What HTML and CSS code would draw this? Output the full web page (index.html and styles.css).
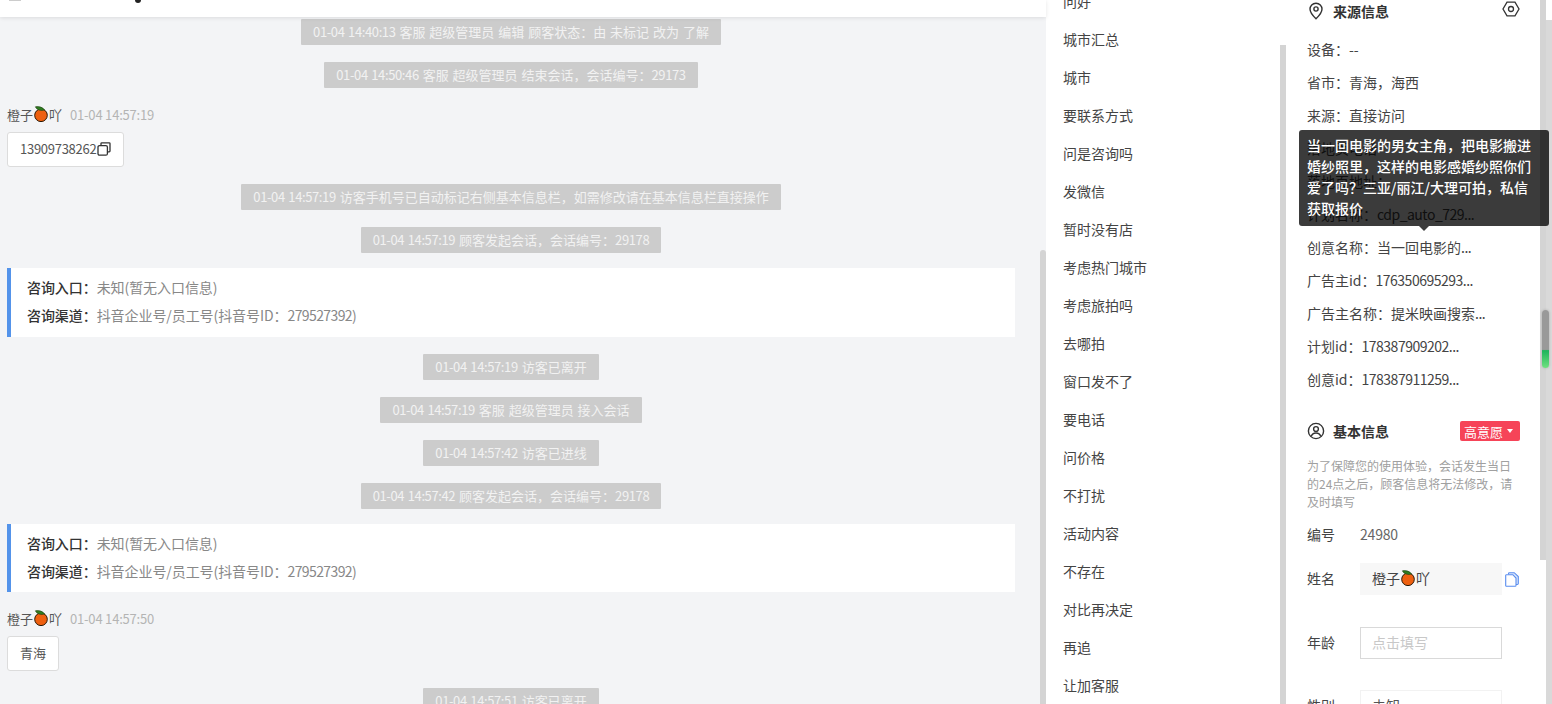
FILE: index.html
```html
<!DOCTYPE html>
<html lang="zh-CN">
<head>
<meta charset="utf-8">
<title>会话详情</title>
<link rel="stylesheet" href="styles.css">
</head>
<body>
<svg class="defs" width="0" height="0" aria-hidden="true">
  <symbol id="orange" viewBox="0 0 16 16">
    <circle cx="8" cy="9.300" r="6.300" fill="#ee6010" stroke="#2a1a08" stroke-width="1"/>
    <path d="M2.400 .8 C6 .2 9.600 1 11.600 4 C8.400 5 4 4.400 2.400 .8Z" fill="#2f7d20" stroke="#1d3d10" stroke-width=".6"/>
  </symbol>
  <symbol id="copy" viewBox="0 0 14 14">
    <path d="M4 3.600V1.600A.8.8 0 0 1 4.800.8H12.200A.8.8 0 0 1 13 1.600V9A.8.8 0 0 1 12.200 9.800H10.400" fill="none" stroke="#333" stroke-width="1.300"/>
    <rect x="1" y="3.600" width="9.400" height="9.600" rx="1.500" fill="none" stroke="#333" stroke-width="1.300"/>
  </symbol>
</svg>
<div class="app">
  <section class="chat">
    <header class="chat-head"><span class="head-check"></span><span class="head-mark"></span></header>
    <div class="chat-body">
      <div class="feed">
        <div class="sys"><span><i class="n">01-04 14:40:13</i> 客服 超级管理员 编辑 顾客状态：由 未标记 改为 了解</span></div>
        <div class="sys"><span><i class="n">01-04 14:50:46</i> 客服 超级管理员 结束会话，会话编号：<i class="n">29173</i></span></div>
        <div class="msg">
          <div class="msg-meta"><span class="msg-name">橙子<svg class="emoji"><use href="#orange"/></svg>吖</span><span class="msg-time">01-04 14:57:19</span></div>
          <div class="bubble"><span class="bubble-num">13909738262</span><svg class="bubble-copy"><use href="#copy"/></svg></div>
        </div>
        <div class="sys"><span><i class="n">01-04 14:57:19</i> 访客手机号已自动标记右侧基本信息栏，如需修改请在基本信息栏直接操作</span></div>
        <div class="sys"><span><i class="n">01-04 14:57:19</i> 顾客发起会话，会话编号：<i class="n">29178</i></span></div>
        <div class="entry">
          <p><b>咨询入口：</b>未知(暂无入口信息)</p>
          <p><b>咨询渠道：</b>抖音企业号/员工号(抖音号ID：<span class="entry-num">279527392)</span></p>
        </div>
        <div class="sys"><span><i class="n">01-04 14:57:19</i> 访客已离开</span></div>
        <div class="sys"><span><i class="n">01-04 14:57:19</i> 客服 超级管理员 接入会话</span></div>
        <div class="sys"><span><i class="n">01-04 14:57:42</i> 访客已进线</span></div>
        <div class="sys"><span><i class="n">01-04 14:57:42</i> 顾客发起会话，会话编号：<i class="n">29178</i></span></div>
        <div class="entry">
          <p><b>咨询入口：</b>未知(暂无入口信息)</p>
          <p><b>咨询渠道：</b>抖音企业号/员工号(抖音号ID：<span class="entry-num">279527392)</span></p>
        </div>
        <div class="msg">
          <div class="msg-meta"><span class="msg-name">橙子<svg class="emoji"><use href="#orange"/></svg>吖</span><span class="msg-time">01-04 14:57:50</span></div>
          <div class="bubble">青海</div>
        </div>
        <div class="sys"><span><i class="n">01-04 14:57:51</i> 访客已离开</span></div>
      </div>
      <div class="bar bar-chat"></div>
    </div>
  </section>

  <section class="quick">
    <ul class="quick-list">
      <li>问好</li><li>城市汇总</li><li>城市</li><li>要联系方式</li><li>问是咨询吗</li><li>发微信</li>
      <li>暂时没有店</li><li>考虑热门城市</li><li>考虑旅拍吗</li><li>去哪拍</li><li>窗口发不了</li><li>要电话</li>
      <li>问价格</li><li>不打扰</li><li>活动内容</li><li>不存在</li><li>对比再决定</li><li>再追</li><li>让加客服</li>
    </ul>
    <div class="bar bar-quick"></div>
  </section>

  <section class="info">
    <div class="info-main">
      <div class="info-title">
        <svg class="title-icon" viewBox="0 0 18 18"><path d="M9 1.200C5.500 1.200 3 3.900 3 7.100C3 11.200 9 16.800 9 16.800S15 11.200 15 7.100C15 3.900 12.500 1.200 9 1.200Z" fill="none" stroke="#333" stroke-width="1.400"/><circle cx="9" cy="7" r="2.100" fill="none" stroke="#333" stroke-width="1.400"/></svg>
        <strong>来源信息</strong>
        <svg class="hex-icon" viewBox="0 0 18 16"><path d="M5 1.200H13L17 8L13 14.800H5L1 8Z" fill="none" stroke="#333" stroke-width="1.300"/><circle cx="9" cy="8" r="2.500" fill="none" stroke="#333" stroke-width="1.300"/></svg>
      </div>
      <div class="info-row">设备：--</div>
      <div class="info-row">省市：青海，海西</div>
      <div class="info-row">来源：直接访问</div>
      <div class="info-row">落地页电话</div>
      <div class="info-row">落地页地址：</div>
      <div class="info-row">计划名称：<span class="row-num">cdp_auto_729...</span></div>
      <div class="info-row">创意名称：当一回电影的<span class="row-num">...</span></div>
      <div class="info-row">广告主id：<span class="row-num">176350695293...</span></div>
      <div class="info-row">广告主名称：提米映画搜索<span class="row-num">...</span></div>
      <div class="info-row">计划id：<span class="row-num">178387909202...</span></div>
      <div class="info-row">创意id：<span class="row-num">178387911259...</span></div>

      <div class="info-title info-title-basic">
        <svg class="title-icon" viewBox="0 0 18 18"><circle cx="9" cy="9" r="7.600" fill="none" stroke="#333" stroke-width="1.400"/><circle cx="9" cy="7" r="2.400" fill="none" stroke="#333" stroke-width="1.400"/><path d="M4.200 14.400C5 11.900 6.800 11 9 11S13 11.900 13.800 14.400" fill="none" stroke="#333" stroke-width="1.400"/></svg>
        <strong>基本信息</strong>
        <span class="tag">高意愿<i class="tag-caret"></i></span>
      </div>
      <p class="note">为了保障您的使用体验，会话发生当日的24点之后，顾客信息将无法修改，请及时填写</p>
      <div class="field field-static"><label>编号</label><span class="field-value">24980</span></div>
      <div class="field"><label>姓名</label><div class="box box-filled">橙子<svg class="emoji"><use href="#orange"/></svg>吖</div>
        <svg class="field-copy" viewBox="0 0 14 15"><path d="M3.500 2.500V1.600A.9.9 0 0 1 4.400.7H9.200L13.300 4.600V11.600A.9.9 0 0 1 12.400 12.500H11" fill="#dbe7fb" stroke="#5a8def" stroke-width="1.100"/><path d="M1.600 2.700H7.800L11 6V13.400A.9.9 0 0 1 10.100 14.300H1.600A.9.9 0 0 1 .7 13.400V3.600A.9.9 0 0 1 1.600 2.700Z" fill="#fff" stroke="#5a8def" stroke-width="1.100"/></svg>
      </div>
      <div class="field"><label>年龄</label><div class="box box-input">点击填写</div></div>
      <div class="field"><label>性别</label><div class="box box-select">未知</div></div>
    </div>
    <div class="bar bar-info"></div>
    <div class="tooltip">当一回电影的男女主角，把电影搬进婚纱照里，这样的电影感婚纱照你们爱了吗？三亚/丽江/大理可拍，私信获取报价</div>
  </section>

  <div class="bar bar-page"></div>
  <div class="thumb"></div>
</div>
</body>
</html>
```
FILE: styles.css
```css
* { box-sizing: border-box; }
html, body { margin: 0; padding: 0; height: 704px; overflow: hidden; background: #fff; }
body { font-family: "Noto Sans CJK SC", "Noto Sans", sans-serif; font-size: 14px; color: #333; }
.defs { position: absolute; }
.app { position: relative; display: flex; width: 1552px; height: 704px; overflow: hidden; }
.bar { flex: none; width: 6px; background: #d4d4d4; }

.chat { display: flex; flex-direction: column; width: 1046px; flex: none; background: #f3f4f6; }
.chat-head { position: relative; z-index: 1; flex: none; height: 17px; background: #fff; box-shadow: 0 1px 4px rgba(0,0,0,.1); display: flex; align-items: flex-end; }
.head-check { width: 12px; height: 1px; margin: 0 0 16px 9px; background: #ccc; }
.head-mark { width: 6px; height: 3px; margin: 0 0 14px 114px; background: #222; border-radius: 0 0 3px 3px; }
.chat-body { flex: 1; display: flex; min-height: 0; }
.feed { flex: 1; padding: 2px 25px 0 7px; min-width: 0; }
.bar-chat { margin-top: 233px; border-radius: 3px 3px 0 0; }

.sys { display: flex; justify-content: center; margin-bottom: 17px; }
.sys span { height: 26px; line-height: 26px; padding: 0 12px; background: #ccc; color: #f2f2f2; font-size: 13px; word-spacing: 1px; white-space: nowrap; border-radius: 1px; }
.sys .n { font-style: normal; letter-spacing: -.38px; }

.msg { margin-bottom: 17px; }
.msg-meta { height: 20px; padding-bottom: 2px; margin-bottom: 7px; display: flex; align-items: center; font-size: 13px; color: #555; }
.msg-name { display: flex; align-items: center; }
.emoji { width: 16px; height: 16px; vertical-align: middle; flex: none; }
.msg-time { margin-left: 8px; color: #b4b4b4; font-size: 13px; letter-spacing: -.2px; }
.bubble { display: inline-flex; align-items: center; height: 35px; padding: 0 12px 2px; background: #fff; border: 1px solid #dcdcdc; border-radius: 3px; font-size: 13px; color: #555; }
.bubble-num { letter-spacing: -.27px; }
.bubble-copy { width: 14px; height: 14px; margin-left: 1px; }

.entry { margin: -2px 0 17px; height: 68.500px; padding: 6px 0 0 16px; background: #fff; border-left: 4px solid #5393ea; }
.entry p { margin: 0; height: 28px; line-height: 26px; font-size: 14px; color: #888; white-space: nowrap; letter-spacing: -.07px; }
.entry b { color: #333; font-weight: 500; }
.entry-num { letter-spacing: -.6px; }

.quick { display: flex; width: 240px; flex: none; background: #fff; }
.quick-list { flex: 1; list-style: none; margin: -17px 0 0; padding: 0 0 0 17px; }
.quick-list li { height: 38px; line-height: 36px; font-size: 14px; color: #444; white-space: nowrap; }
.bar-quick { margin-top: 45px; }

.info { position: relative; display: flex; width: 260px; flex: none; background: #fff; }
.info-main { flex: 1; min-width: 0; padding-left: 21px; }
.bar-info { height: 560px; }
.info-title { display: flex; align-items: center; height: 24px; padding-bottom: 2px; margin-bottom: 10px; }
.info-title strong { font-size: 14px; font-weight: 600; color: #333; margin-left: 8px; }
.title-icon { width: 18px; height: 18px; flex: none; }
.hex-icon { width: 18px; height: 16px; margin: -4px 20px 0 auto; flex: none; }
.info-row { height: 33px; line-height: 31px; font-size: 14px; color: #444; white-space: nowrap; }
.row-num { letter-spacing: -.5px; }
.info-title-basic { margin: 23px 0 0; }
.tag { display: flex; align-items: center; height: 20px; width: 60px; margin-left: auto; margin-right: 20px; padding-left: 4px; background: #f64458; color: #fff; font-size: 13px; border-radius: 2px; }
.tag-caret { margin-left: 4px; width: 0; height: 0; border-left: 3px solid transparent; border-right: 3px solid transparent; border-top: 4px solid #fff; }
.note { margin: 13px 0 8px; width: 214px; font-size: 12px; line-height: 18px; color: #a0a0a0; }
.field { display: flex; align-items: center; height: 32px; margin-bottom: 31.500px; font-size: 14px; color: #444; }
.field-static { margin-bottom: 12px; }
.field label { width: 53px; flex: none; padding-bottom: 2px; }
.field-value { color: #666; padding-bottom: 2px; letter-spacing: -.2px; }
.box { display: flex; align-items: center; width: 142px; height: 32px; padding: 0 0 2px 12px; flex: none; }
.box-filled { background: #f7f7f7; }
.box-input { border: 1px solid #d9d9d9; padding-left: 11px; color: #c8c8c8; }
.box-select { border: 1px solid #f2f2f2; padding-left: 11px; color: #555; }
.field-copy { width: 14px; height: 15px; margin-left: 3px; flex: none; }

.tooltip { position: absolute; z-index: 3; left: 13px; top: 130px; width: 250px; height: 96px; padding: 5px 8px 0; background: rgba(0,0,0,.77); color: #fff; font-size: 14px; font-weight: 500; line-height: 21px; border-radius: 3px; }
.tooltip::after { content: ""; position: absolute; left: 120px; top: 96px; border-left: 5px solid transparent; border-right: 5px solid transparent; border-top: 5px solid rgba(0,0,0,.77); }

.bar-page { margin-top: 20px; background: #d9d9d9; }
.thumb { position: absolute; z-index: 2; left: 1542px; top: 310px; width: 7px; height: 58px; border-radius: 4px; background: linear-gradient(#999 0, #999 68%, #1fb45c 70%, #6fe07f 100%); box-shadow: 0 0 3px rgba(0,0,0,.2); }
```
